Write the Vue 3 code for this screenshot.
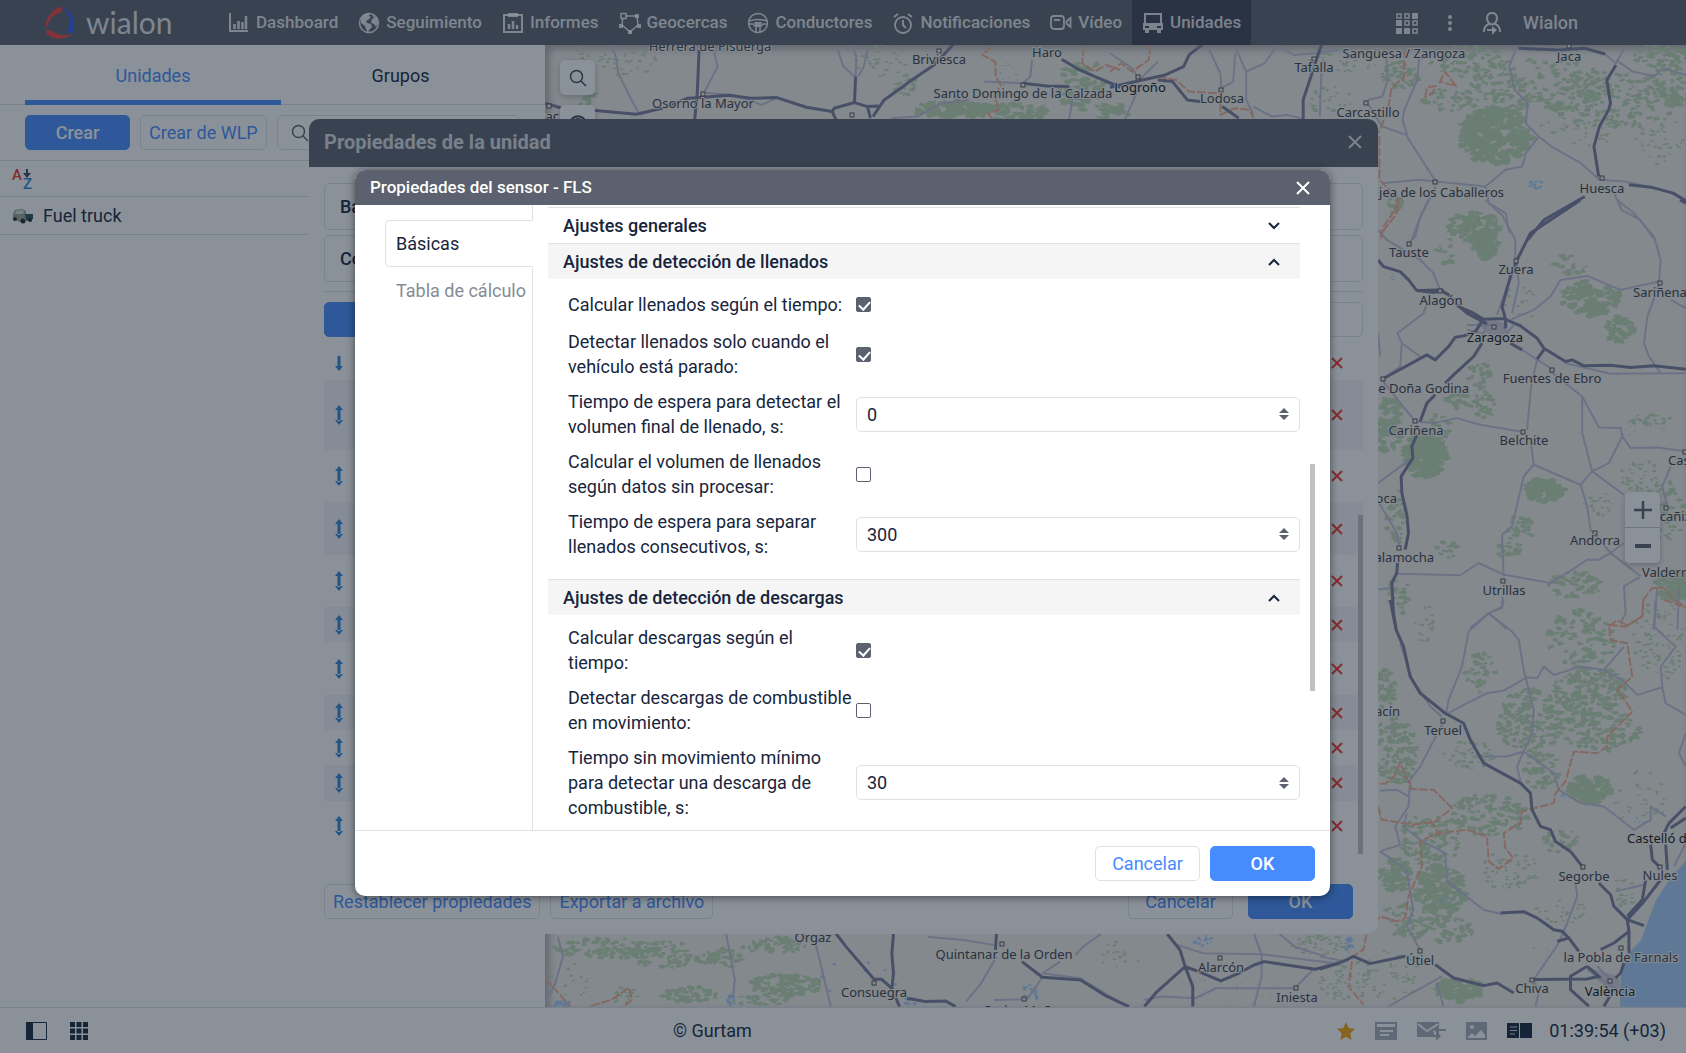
<script setup>
import { ref } from 'vue'

const navItems = [
  { icon: 'chart', label: 'Dashboard' },
  { icon: 'globe', label: 'Seguimiento' },
  { icon: 'report', label: 'Informes' },
  { icon: 'fence', label: 'Geocercas' },
  { icon: 'wheel', label: 'Conductores' },
  { icon: 'alarm', label: 'Notificaciones' },
  { icon: 'video', label: 'Vídeo' },
  { icon: 'bus', label: 'Unidades' }
]
const activeNav = ref('Unidades')

// rows of the sensors table behind the dialog
const sensorRows = [35, 70, 52, 53, 52, 35, 53, 35, 35, 36, 50]

const fillings = ref([
  { id: 'fill-time', type: 'checkbox', label: 'Calcular llenados según el tiempo:', value: true },
  { id: 'fill-stopped', type: 'checkbox', label: 'Detectar llenados solo cuando el vehículo está parado:', value: true },
  { id: 'fill-timeout', type: 'number', label: 'Tiempo de espera para detectar el volumen final de llenado, s:', value: 0 },
  { id: 'fill-raw', type: 'checkbox', label: 'Calcular el volumen de llenados según datos sin procesar:', value: false },
  { id: 'fill-split', type: 'number', label: 'Tiempo de espera para separar llenados consecutivos, s:', value: 300 }
])
const drains = ref([
  { id: 'drain-time', type: 'checkbox', label: 'Calcular descargas según el tiempo:', value: true },
  { id: 'drain-moving', type: 'checkbox', label: 'Detectar descargas de combustible en movimiento:', value: false },
  { id: 'drain-stop', type: 'number', label: 'Tiempo sin movimiento mínimo para detectar una descarga de combustible, s:', value: 30 }
])
const sections = ref([
  { title: 'Ajustes generales', open: false, fields: [] },
  { title: 'Ajustes de detección de llenados', open: true, fields: fillings },
  { title: 'Ajustes de detección de descargas', open: true, fields: drains }
])

// map tiles, each one with its own grid
const tiles = [
  {
    at: 'translate(540 0) scale(.37 .333)',
    main: 'M430 150L425 280L418 360M14 310L60 325L150 332L260 343L330 325L400 295L440 292L510 286L570 295L640 293L720 322L790 335L795 325L850 308L885 320L915 318M790 335L800 360M853 230L850 308M885 320L893 355M900 350L930 300L975 265L1005 240L1065 195L1120 130M1305 250L1370 258L1430 260M1410 178L1450 205L1500 230L1568 262',
    minor: 'M190 130L205 170L212 220L245 295L270 345M470 150L480 200L445 275L440 300M805 150L820 200L850 230M840 130L855 170L853 230M885 150L875 200L860 230M1330 180L1325 230L1305 250L1200 245M1160 300L1085 310L1020 350L950 355M1440 290L1430 360M440 278L520 285L600 315L640 293M270 345L310 330',
    border: 'M1220 140L1195 165L1230 185L1232 230L1245 255L1230 290L1240 330L1210 340L1225 360M1470 140L1465 190L1500 215L1530 195L1568 210'
  },
  {
    at: 'translate(1110 0) scale(.368 .333)',
    main: 'M0 262L70 245L150 225L200 200L215 165L255 130M130 240L170 245L210 300L245 305M305 320L350 355M575 135L565 165L555 200L540 250L525 300L525 360M1110 145L1220 150L1290 145L1345 162M1375 195L1350 240L1360 310L1355 330L1330 380L1315 440L1328 530M1290 590L1180 660L1135 720M1410 555L1470 562L1530 580L1568 605',
    minor: 'M0 160L60 205L80 240M130 185L80 240M270 150L300 220L303 270M340 140L370 215L370 300L390 345M455 135L420 190L370 215M303 265L335 245L340 160M40 360L80 260M575 200L570 350M390 320L440 350L480 345L520 355M455 140L500 165L560 160L620 150M750 160L755 240L740 290L700 300M840 170L835 240L800 330L795 360L810 415L885 545L840 540L740 550M700 310L740 380L805 405M885 545L1020 560L1075 510L1120 500L1130 460L1165 410L1130 370L1135 310L1100 270L1085 200L1105 140M1165 410L1200 440L1280 490L1330 540L1400 545L1470 562M1345 162L1375 190L1400 140M1375 180L1420 215L1480 230L1500 205L1565 225M885 560L840 660L820 720M1020 560L1030 610L1075 640L1085 700M1370 580L1390 630L1440 660L1480 720',
    border: 'M110 135L105 180L60 215L30 190L0 215M130 230L180 240L215 275L290 280M300 310L300 345L340 325L380 330L390 355M800 150L800 230L765 265L755 330L730 400M856 292L862 262L885 258L876 280L856 292M895 250L910 215L940 258L895 245M732 410V540L785 600L780 640L745 690L738 715'
  },
  {
    at: 'translate(1320 200) scale(.334 .333)',
    main: 'M174 180L190 200L240 215L265 240L290 272L360 270L385 285L415 320L460 340L490 358L550 356L600 378L650 415L670 445L735 485L755 480L790 498L870 496L930 503L1000 498L1095 508M290 272L340 278L370 270M415 318L440 340L500 372M190 536L320 465L345 480L385 440L405 412L430 408L465 395L490 358M780 0L630 100L590 180L570 230L555 285L545 320L555 356L556 385M650 478L670 450M485 430L460 470L400 525L375 550M345 585L320 610L300 665M290 705L275 740L278 775L243 830L245 880L260 945L265 1000L255 1050M232 1090L230 1120L215 1150L220 1240L228 1290M570 430L605 450M1078 0L1095 10',
    minor: 'M325 0L300 50L285 110L265 130M174 90L200 120L300 180L340 220L360 270M495 0L545 45L585 120L585 180M590 190L595 250L575 340M530 345L560 260L575 230M570 360L640 330L690 290L720 240L800 228L900 270L1015 245L1020 180L1000 110L940 40L890 0M1015 255L980 350L970 430L985 470L1020 520M1050 300L1095 325M190 536L240 500L245 430L232 400L310 340L320 310M245 430L300 470M174 400L180 470M185 540L285 665L340 670L410 655L480 675L600 695M605 450L690 505M440 375H520M500 372L490 400L440 390M650 478L632 560L620 690M630 715L640 795L780 855L815 815L910 885M690 515L785 590L785 700L815 815L865 790L905 710L900 685L835 683L785 590M905 710L930 745L1010 743L1060 750L1095 755M735 490L870 522L1095 520M640 795L610 830L575 980L545 1005L550 1130M780 855L800 920L810 990L870 1060L835 1080L800 1080L740 1120L690 1150L550 1125L475 1090L420 1127L232 1122M870 1060L910 1030M870 1060L960 1130M1050 800L1025 860L1040 920M174 850L275 775M174 905L230 1000L238 1040M547 1190L545 1225L505 1240L450 1285M505 1240L560 1290M174 1170L215 1165M960 1130L910 1160L915 1240L900 1270M1010 1160L1000 1290M1075 1170L1070 1290M580 375L560 400L550 380',
    border: 'M233 0L225 30L190 80L180 120M865 1280L890 1262L920 1278L965 1250L968 1200L995 1165L1030 1165L1060 1200L1095 1222'
  },
  {
    at: 'translate(1320 600) scale(.334 .333)',
    main: 'M210 0L228 90L250 140L270 230L300 280L375 340L430 370L450 420L490 490L600 550L630 580L635 630L660 680L690 690L705 725L750 755L785 800M835 850L870 885L880 920L920 960L970 978M920 960L925 995L880 1030L840 1050M920 960L970 905L1020 840M920 950L965 900L975 840M990 735L995 780L1015 800M1035 735L1040 810M1095 620L1045 670L1030 700M1095 655L1050 685M540 940L610 936L650 955L700 990L725 995L745 1015L775 1055M710 1025L745 1015M925 995L925 1060M800 1100L750 1130L750 1170L805 1220M640 1140L800 1138L835 1130M800 1100L840 1135M910 1090L900 1120L885 1135M868 1190L850 1220M345 1095L400 1135L490 1158L530 1150L580 1180M0 1108L70 1085L100 1070L150 1092L255 1070',
    minor: 'M550 0L545 20L505 40L445 95L425 200L385 300L378 340M505 40L570 90L595 120L610 210L640 330L635 400L610 455L590 500L600 545M385 340L440 310L500 280L550 272L620 232L650 235L670 200L700 225L780 200L850 210L910 140M850 210L910 245L950 285L1025 262L1020 200L1065 140L1000 80L1005 0M1025 262L1035 310L1095 345M1095 400L1075 460L1095 500M370 365L300 500L270 540L265 620L225 680L240 735L180 755M260 640L250 680L300 720L375 760L380 845L490 930L540 942M180 572L230 570L265 590M180 755L260 810L270 880L280 930L260 980L300 1050M490 470L560 470L610 455L700 520L715 570L780 610L850 620L940 690L990 660L990 620L1035 650M765 850L770 890L740 970L715 1030L640 1140L655 1180L645 1220M885 875L970 855M365 1130L205 1220M350 1150L370 1220M240 130L275 235L330 320L365 350M800 1110L890 1170M830 1100L870 1140L845 1160M0 1070L70 1085M1095 730L1060 800',
    border: 'M968 0L965 50L915 80L865 75L870 120L920 130L935 230L890 270L935 335L860 410L860 440L830 460L760 455L735 545L705 580L700 610L605 635L600 670L550 700L555 745L578 775L535 808L505 785L500 710L440 690L350 700L300 725L305 800L265 890L255 955L230 965L180 950L140 1000L130 1050L98 1070L85 1160L130 1215M174 620L185 660L280 675L345 665L395 625L340 570L275 568L240 490L222 530L195 552L174 550M330 660L360 710M1030 0L1095 22'
  },
  {
    at: 'translate(540 920) scale(.51 .333)',
    main: 'M575 30L600 80L655 178L670 178L690 205L693 160L690 100L693 42M690 205L705 260M720 235L755 245L795 243L815 260M895 42L893 90M945 125L985 172L1060 180L1110 228L1155 260M1230 42L1255 90L1265 140L1280 200L1280 260M1185 260L1210 215L1265 140L1300 160L1335 183L1370 160L1400 135L1420 125L1520 148L1568 130',
    minor: 'M10 250L30 190L45 110L35 50M365 42L375 120L382 180L378 235M540 70L550 130L570 260M760 50L830 60L890 75M895 110L865 190L835 245M1100 42L1065 80L1050 105M985 172L955 238L890 240M1020 125L985 160L1060 175L1150 260M1250 75L1300 100L1415 103L1560 130M1400 42L1415 103L1415 170L1400 260M1480 205L1325 205L1285 235L1220 230L1185 240M1450 42L1480 80L1540 110M1515 150L1480 205',
    border: 'M10 175L60 260M100 258L140 240L175 203L180 240L165 258'
  }
]

const places = [
  ['Herrera de Pisuerga', 710, 51], ['Osorno la Mayor', 703, 108], ['Briviesca', 939, 64], ['Haro', 1047, 57],
  ['Santo Domingo de la Calzada', 1023, 98], ['Logroño', 1140, 92, 'middle', true], ['Lodosa', 1222, 103],
  ['Tafalla', 1314, 72], ['Sangüesa / Zangoza', 1404, 58], ['Jaca', 1569, 61], ['Carcastillo', 1368, 117],
  ['Ejea de los Caballeros', 1504, 197, 'end'], ['Huesca', 1602, 193], ['Tauste', 1409, 257], ['Zuera', 1516, 274],
  ['Sariñena', 1633, 297, 'start'], ['Alagón', 1441, 305], ['Zaragoza', 1495, 342, 'middle', true],
  ['Fuentes de Ebro', 1552, 383], ['La Almunia de Doña Godina', 1469, 393, 'end'], ['Cariñena', 1416, 435],
  ['Belchite', 1524, 445], ['Caspe', 1668, 465, 'start'], ['Alcañiz', 1648, 521, 'start'], ['Daroca', 1397, 503, 'end'],
  ['Calamocha', 1434, 562, 'end'], ['Andorra', 1595, 545], ['Valderrobres', 1642, 577, 'start'], ['Utrillas', 1504, 595],
  ['Albarracín', 1400, 716, 'end'], ['Teruel', 1443, 735], ['Castelló de la Plana', 1627, 843, 'start', true],
  ['Segorbe', 1584, 881], ['Nules', 1660, 880], ['la Pobla de Farnals', 1621, 962], ['València', 1610, 996, 'middle', true],
  ['Chiva', 1532, 993], ['Útiel', 1420, 965], ['Orgaz', 813, 942], ['Quintanar de la Orden', 1004, 959],
  ['Alarcón', 1221, 972], ['Iniesta', 1297, 1002], ['Consuegra', 874, 997], ['Pedro Muñoz', 1025, 1015], ['Monzac', 559, 121, 'end']
]
const towns = [
  [703, 94], [852, 115], [939, 51], [1023, 85], [1138, 77], [1221, 90], [1314, 59], [1366, 103], [1569, 46], [1435, 182],
  [1602, 178], [1409, 244], [1516, 261], [1660, 283], [1440, 291], [1494, 327], [1552, 370], [1383, 379], [1415, 421],
  [1523, 432], [1685, 452], [1666, 508], [1399, 548], [1595, 533], [1503, 581], [1443, 721], [1583, 867], [1660, 867],
  [1621, 948], [1610, 981], [1532, 980], [1420, 951], [1002, 944], [1220, 958], [1296, 988], [874, 983], [1024, 999], [549, 106]
]

// wooded areas: centre x, y, radius x, y, amount of speckles, speckle size
const woods = [
  [580, 65, 10, 22, 25, 2], [588, 100, 8, 14, 18, 4], [628, 62, 30, 15, 40, 2], [880, 60, 28, 16, 40, 2], [905, 85, 16, 10, 20, 3],
  [955, 110, 40, 9, 90, 4], [1010, 112, 40, 8, 60, 4], [1080, 85, 26, 25, 60, 4], [1110, 112, 22, 8, 20, 4], [1330, 100, 26, 14, 25, 2],
  [1345, 60, 35, 12, 50, 2], [1400, 75, 20, 14, 45, 3], [1470, 62, 40, 16, 70, 3], [1540, 85, 70, 26, 190, 3], [1610, 100, 70, 28, 170, 3],
  [1660, 55, 30, 12, 60, 3], [1670, 85, 24, 22, 70, 3], [1495, 135, 35, 28, 210, 5], [1450, 100, 30, 12, 40, 3], [1580, 130, 40, 16, 40, 2],
  [1660, 140, 25, 25, 40, 2], [1475, 228, 26, 16, 90, 4], [1485, 245, 14, 14, 60, 4], [1445, 252, 12, 14, 15, 3], [1395, 205, 8, 8, 20, 3],
  [1570, 265, 18, 12, 22, 3], [1590, 298, 28, 18, 100, 4], [1620, 330, 14, 14, 40, 4], [1520, 310, 18, 25, 15, 2], [1480, 375, 12, 14, 30, 3],
  [1485, 405, 12, 14, 25, 3], [1460, 400, 14, 8, 20, 4], [1388, 425, 14, 28, 70, 4], [1425, 455, 20, 22, 140, 5], [1440, 430, 10, 20, 25, 3],
  [1396, 515, 10, 28, 30, 3], [1545, 490, 20, 12, 75, 4], [1520, 530, 14, 14, 30, 3], [1510, 550, 12, 10, 25, 3], [1400, 595, 12, 20, 25, 3],
  [1450, 550, 14, 10, 14, 3], [1650, 420, 22, 6, 30, 2], [1640, 475, 20, 16, 40, 2], [1665, 510, 20, 30, 60, 3], [1672, 585, 18, 16, 80, 4],
  [1600, 505, 18, 12, 20, 2], [1575, 585, 26, 14, 70, 3], [1580, 640, 35, 30, 110, 3], [1660, 640, 26, 40, 90, 2], [1425, 625, 10, 20, 20, 2],
  [1480, 670, 16, 22, 35, 3], [1385, 690, 10, 22, 50, 3], [1395, 750, 22, 35, 130, 3], [1590, 690, 36, 26, 190, 3], [1530, 720, 34, 32, 190, 3],
  [1600, 730, 40, 22, 140, 3], [1470, 755, 26, 14, 60, 2], [1590, 790, 22, 14, 100, 4], [1540, 770, 20, 18, 50, 3], [1490, 815, 40, 22, 120, 3],
  [1430, 840, 30, 26, 110, 3], [1395, 875, 16, 16, 60, 4], [1440, 890, 26, 24, 130, 4], [1410, 920, 30, 18, 60, 3], [1510, 870, 30, 20, 60, 2],
  [1560, 840, 18, 14, 30, 3], [1640, 800, 25, 30, 30, 2], [1560, 910, 26, 16, 26, 2], [1625, 895, 12, 20, 24, 2], [1460, 990, 24, 12, 80, 4],
  [1390, 975, 30, 25, 50, 2], [1345, 980, 26, 22, 60, 2], [1450, 930, 24, 14, 50, 3], [605, 948, 50, 10, 90, 3], [660, 955, 34, 14, 80, 3],
  [720, 958, 24, 10, 50, 3], [775, 945, 34, 8, 50, 3], [785, 985, 36, 12, 140, 3], [690, 995, 28, 8, 60, 3], [625, 995, 14, 10, 26, 2],
  [760, 1000, 30, 5, 26, 3], [1120, 955, 26, 14, 16, 2], [1240, 990, 60, 14, 26, 1], [1320, 945, 30, 10, 50, 2], [570, 975, 20, 26, 14, 2]
]
const waters = [
  [1536, 184, 6, 5, 12, 2], [1008, 75, 10, 14, 14, 1], [1393, 277, 2, 3, 6, 1], [1336, 94, 2, 3, 6, 1], [860, 980, 40, 20, 14, 2],
  [910, 1000, 6, 7, 14, 2], [731, 1000, 5, 5, 14, 2], [1205, 942, 10, 6, 14, 2], [1443, 900, 6, 6, 10, 1], [1565, 795, 8, 4, 10, 1],
  [1640, 820, 6, 4, 8, 1], [1640, 430, 26, 12, 20, 1], [1348, 945, 5, 8, 16, 2], [562, 1004, 12, 4, 20, 2], [1030, 995, 8, 12, 18, 2], [1550, 950, 30, 4, 6, 1]
]

// small fixed-seed generator so the vegetation never jumps between renders
let seed = 20417
function rnd() {
  seed = (seed * 16807) % 2147483647
  return seed / 2147483647
}

function speckle(areas) {
  let d = ''
  for (const [cx, cy, rx, ry, n, size] of areas) {
    for (let i = 0; i < n; i++) {
      const a = rnd() * Math.PI * 2
      const r = Math.sqrt(rnd())
      const x = cx + Math.cos(a) * rx * r
      const y = cy + Math.sin(a) * ry * r
      const pts = []
      for (let k = 0; k < 6; k++) {
        const t = (k / 6) * Math.PI * 2
        const s = size * (0.3 + rnd() * 0.9)
        pts.push((x + Math.cos(t) * s * 1.3).toFixed(1) + ' ' + (y + Math.sin(t) * s * 0.8).toFixed(1))
      }
      d += 'M' + pts.join('L') + 'Z'
    }
  }
  return d
}
const woodPath = speckle(woods)
const waterPath = speckle(waters)
</script>

<template>
  <div class="app">
    <header class="topbar">
      <div class="logo">
        <svg width="32" height="34" viewBox="0 0 32 34">
          <path d="M16 1C8 3 1 13 1 23c0 1 1 1 1 0C4 15 9 9 15 7c4-1 5-6 1-6z" fill="#f2433c" />
          <path d="M5 24c-3-1-4 3-1 5 7 5 17 5 24-1-8 2-14 1-19-2-2-1-3-2-4-2z" fill="#f2433c" />
          <path d="M18 1c9 3 14 13 11 24-1 3-6 3-5 0 3-9 2-18-6-24z" fill="#2f5fff" />
        </svg>
        <span>wialon</span>
      </div>
      <nav>
        <a v-for="item in navItems" :key="item.label" href="#" :class="{ active: item.label === activeNav }" @click.prevent="activeNav = item.label">
          <svg class="ic" viewBox="0 0 22 22" fill="none" stroke="currentColor" stroke-width="2">
            <g v-if="item.icon === 'chart'"><path d="M2 1v18h18" /><path d="M6.500 12v5M10.500 9v8M14.500 10v7M18 4v13" stroke-width="2.500" /></g>
            <g v-else-if="item.icon === 'globe'">
              <circle cx="11" cy="11" r="9.500" stroke-width="1.500" />
              <path d="M3 6l4-4 5-1-1 3 2 1-3 3-2 1 1 2 4 1 1 3-3 3-1 3-2-4-1-3-4-3zM14 3l5 3 1 5-2 4-2-3-3-1 1-4 2-1z" fill="currentColor" stroke="none" />
            </g>
            <g v-else-if="item.icon === 'report'"><path d="M2 3h18v17H2z" /><path d="M6 1h10v4H6z" fill="currentColor" stroke="none" /><path d="M7 12v5M11 9v8M15 13v4" stroke-width="2.500" /></g>
            <g v-else-if="item.icon === 'fence'">
              <path d="M4 4l14 0M4 4l-1 9 8 7 8-7-1-9" stroke-width="1.500" />
              <path d="M2 1.500h5v5H2z" fill="#5b616e" stroke-width="1.500" /><path d="M16 2h4v4h-4zM0 12h4v4H0zM18 12h4v4h-4zM9 18h4v4H9z" fill="currentColor" stroke="none" />
            </g>
            <g v-else-if="item.icon === 'wheel'"><circle cx="11" cy="11" r="9.500" stroke-width="1.500" /><path d="M2 9c6-2 12-2 18 0M2 12h4l3 3v5M20 12h-4l-3 3v5" stroke-width="1.500" /><path d="M7 10h8l-2 5H9z" fill="currentColor" stroke="none" /></g>
            <g v-else-if="item.icon === 'alarm'"><circle cx="11" cy="13" r="8" stroke-width="1.800" /><path d="M11 8v5l3 3M2 5l4-3M20 5l-4-3" /></g>
            <g v-else-if="item.icon === 'video'"><rect x="1" y="4" width="13" height="13" rx="3" stroke-width="1.800" /><path d="M4 8h6M16.500 9.500l4-3.500v9l-4-3.500z" stroke-width="1.800" /></g>
            <path v-else d="M2 1h18v10h1v7h-2v3h-4v-3H7v3H3v-3H1v-7h1zM4 3v8h14V3zM3 14h4v2H3zM15 14h4v2h-4z" fill="currentColor" fill-rule="evenodd" stroke="none" />
          </svg>
          {{ item.label }}
        </a>
      </nav>
      <div class="user">
        <button aria-label="Aplicaciones">
          <svg width="22" height="22" viewBox="0 0 22 22" fill="none" stroke="currentColor" stroke-width="1.500">
            <path d="M1 2h4v4H1zM9 2h4v4H9zM9 9h4v4H9zM17 9h4v4h-4zM17 17h4v4h-4z" />
            <path d="M16 1h6v6h-6zM0 8h6v6H0zM0 16h6v6H0zM8 16h6v6H8z" fill="currentColor" stroke="none" />
          </svg>
        </button>
        <button aria-label="Más">
          <svg width="6" height="18" viewBox="0 0 6 18" fill="currentColor"><circle cx="3" cy="3" r="2" /><circle cx="3" cy="9" r="2" /><circle cx="3" cy="15" r="2" /></svg>
        </button>
        <button class="account">
          <svg width="20" height="24" viewBox="0 0 20 24" fill="none" stroke="currentColor" stroke-width="2">
            <path d="M10 2c-6 0-6 7-3 10 2 2 4 2 6 0 3-3 3-10-3-10zM2 21c0-5 2-7 5-8M18 21c0-5-2-7-5-8M5 19h8" />
            <path d="M10 15l5 4-5 5z" fill="currentColor" stroke="none" />
          </svg>
          Wialon
        </button>
      </div>
    </header>

    <main>
      <aside class="panel">
        <div class="tabs">
          <button class="on">Unidades</button>
          <button>Grupos</button>
        </div>
        <div class="tools">
          <button class="btn primary">Crear</button>
          <button class="btn">Crear de WLP</button>
          <label class="search">
            <svg width="18" height="18" viewBox="0 0 18 18" fill="none" stroke="#5b616e" stroke-width="1.500"><circle cx="7.500" cy="7.500" r="6" /><path d="M12 12l5 5" /></svg>
            <input type="text" aria-label="Buscar">
          </label>
        </div>
        <div class="sort">
          <span class="letter-a">A</span>
          <span class="letter-z">
            <svg width="8" height="9" viewBox="0 0 8 9"><path d="M3 0h2v4h3L4 9 0 4h3z" fill="#37465c" /></svg>
            Z
          </span>
        </div>
        <div class="unit">
          <svg width="22" height="16" viewBox="0 0 22 16">
            <path d="M1 6l2-4 7-1 4 2v8l-6 3-7-3z" fill="#9aa597" /><path d="M4 3l5-1 3 1-1 3-8 0z" fill="#dce2da" /><path d="M13 6h8v5l-7 2z" fill="#2b555c" />
            <circle cx="11" cy="13" r="2.500" fill="#21281f" /><circle cx="3" cy="11" r="2" fill="#21281f" /><circle cx="18" cy="12" r="2" fill="#21281f" />
          </svg>
          Fuel truck
        </div>
      </aside>

      <div class="map">
        <svg class="canvas" width="100%" height="100%">
          <g transform="translate(-545 -45)">
            <path :d="woodPath" class="wood" />
            <path :d="waterPath" class="water" />
            <path class="water" d="M1686 861L1671 877L1656 900L1641 940L1629 953L1621 973L1620 1010H1800V861Z" />
            <path class="town-area" d="M1590 968l14 4 14 4 4 14-14-2-14-10zM1476 322l18-2 14 4-4 12-16-2z" />
            <g v-for="tile in tiles" :key="tile.at" :transform="tile.at">
              <path class="road minor" :d="tile.minor" />
              <path class="road border-line" :d="tile.border" />
              <path class="road main-road" :d="tile.main" />
            </g>
            <rect v-for="(t, i) in towns" :key="'t' + i" class="town" :x="t[0] - 2" :y="t[1] - 2" width="4" height="4" />
            <text v-for="p in places" :key="p[0]" :x="p[1]" :y="p[2]" :text-anchor="p[3] || 'middle'" :class="{ capital: p[4] }">{{ p[0] }}</text>
          </g>
        </svg>
        <div class="map-tools">
          <button aria-label="Buscar en el mapa">
            <svg width="18" height="18" viewBox="0 0 18 18" fill="none" stroke="#3a4453" stroke-width="1.500"><circle cx="7.500" cy="7.500" r="6" /><path d="M12 12l5 5" /></svg>
          </button>
          <button aria-label="Visibilidad">
            <svg width="20" height="18" viewBox="0 0 20 18" fill="none" stroke="#3a4453" stroke-width="2"><path d="M1 9c5-9 13-9 18 0-5 8-13 8-18 0z" /><circle cx="10" cy="8" r="3" /></svg>
          </button>
        </div>
        <div class="zoom">
          <button aria-label="Acercar"><svg width="18" height="18" viewBox="0 0 18 18" stroke="#5b616e" stroke-width="2.500"><path d="M9 0v18M0 9h18" /></svg></button>
          <button aria-label="Alejar"><svg width="18" height="18" viewBox="0 0 18 18" stroke="#5b616e" stroke-width="4"><path d="M1 9h16" /></svg></button>
        </div>
      </div>
    </main>

    <footer class="statusbar">
      <div class="left">
        <svg width="21" height="18" viewBox="0 0 21 18"><path d="M.500 .500h20v17H.500z" fill="none" stroke="#17253c" /><path d="M0 0h7v18H0z" fill="#17253c" /></svg>
        <svg width="18" height="18" viewBox="0 0 18 18" fill="#17253c"><path d="M0 0h5v5H0zM6.500 0h5v5h-5zM13 0h5v5h-5zM0 6.500h5v5H0zM6.500 6.500h5v5h-5zM13 6.500h5v5h-5zM0 13h5v5H0zM6.500 13h5v5h-5zM13 13h5v5h-5z" /></svg>
      </div>
      <span class="copy">© Gurtam</span>
      <div class="status">
        <svg width="18" height="18" viewBox="0 0 18 18"><path d="M9 0l2.700 6 6.300.700-4.700 4.500L14.600 18 9 14.700 3.400 18l1.300-6.800L0 6.700 6.300 6z" fill="#f6a409" /></svg>
        <svg width="22" height="18" viewBox="0 0 22 18"><path d="M0 0h22v18H0zM2 2v3h18V2zM5 8v2h13V8zM5 12v2h9v-2z" fill="#a9aeb6" fill-rule="evenodd" /></svg>
        <svg width="29" height="18" viewBox="0 0 29 18">
          <path d="M0 0h22v5l-6 4 2 6H0z" fill="#a9aeb6" /><path d="M1 2l9 7L21 2" fill="none" stroke="#fff" stroke-width="2" />
          <path d="M29 8h-8M14 14h6" stroke="#a9aeb6" stroke-width="2" /><path d="M22 3v10l-5-5zM19 9l5 5-5 5z" fill="#a9aeb6" />
        </svg>
        <svg width="21" height="18" viewBox="0 0 21 18"><path d="M0 0h21v18H0zM2 15l4-4 3 3 6-6 4 5v3H2zM6 3a2 2 0 100 4 2 2 0 000-4z" fill="#a9aeb6" fill-rule="evenodd" /></svg>
        <svg width="25" height="15" viewBox="0 0 25 15"><path d="M0 0h12v15H0zM13 0h12v15H13z" fill="#17253c" /><path d="M3 4h7M3 7.500h7M3 11h5" stroke="#d5d8dc" /></svg>
        <span>01:39:54 (+03)</span>
      </div>
    </footer>

    <section class="unit-dialog" aria-label="Propiedades de la unidad">
      <div class="unit-head">
        Propiedades de la unidad
        <button aria-label="Cerrar"><svg width="14" height="14" viewBox="0 0 14 14" stroke="currentColor" stroke-width="2"><path d="M1 1l12 12M13 1L1 13" /></svg></button>
      </div>
      <div class="unit-body">
        <div class="fold">Ba</div>
        <div class="fold">Co</div>
        <div class="sensor-tools">
          <button class="btn primary"></button>
          <input type="text" aria-label="Filtrar sensores">
        </div>
        <div class="sensors">
          <div v-for="(h, i) in sensorRows" :key="i" class="sensor" :style="{ height: h + 'px' }">
            <svg width="8" height="20" viewBox="0 0 8 20" fill="#2b86d9">
              <path v-if="i" d="M2.500 4h3v12h-3zM4 0l4 5H0zM4 20l4-5H0z" />
              <path v-else d="M2.500 3h3v10h-3zM4 18l4-5H0z" />
            </svg>
            <button aria-label="Eliminar"><svg width="12" height="12" viewBox="0 0 12 12" stroke="#f2352f" stroke-width="2"><path d="M1 1l10 10M11 1L1 11" /></svg></button>
          </div>
        </div>
      </div>
      <div class="unit-foot">
        <button class="btn">Restablecer propiedades</button>
        <button class="btn">Exportar a archivo</button>
        <span class="grow"></span>
        <button class="btn wide">Cancelar</button>
        <button class="btn primary">OK</button>
      </div>
      <i class="thumb"></i>
    </section>

    <div class="overlay">
      <section class="dialog" role="dialog" aria-label="Propiedades del sensor">
        <div class="dialog-head">
          Propiedades del sensor - FLS
          <button aria-label="Cerrar"><svg width="14" height="14" viewBox="0 0 14 14" stroke="#fff" stroke-width="2"><path d="M1 1l12 12M13 1L1 13" /></svg></button>
        </div>
        <div class="dialog-body">
          <div class="side">
            <button class="side-tab on">Básicas</button>
            <button class="side-tab">Tabla de cálculo</button>
          </div>
          <div class="content">
            <div v-for="s in sections" :key="s.title" class="section">
              <button class="section-head" :class="{ open: s.open }" @click="s.open = !s.open">
                {{ s.title }}
                <svg width="14" height="8" viewBox="0 0 14 8" fill="none" stroke="#17253c" stroke-width="2"><path :d="s.open ? 'M2 7l5-5 5 5' : 'M2 1l5 5 5-5'" /></svg>
              </button>
              <div v-if="s.open" class="fields">
                <div v-for="f in s.fields" :key="f.id" class="field">
                  <label :for="f.id">{{ f.label }}</label>
                  <input v-if="f.type === 'checkbox'" :id="f.id" v-model="f.value" type="checkbox">
                  <div v-else class="number">
                    <input :id="f.id" v-model="f.value" type="number">
                    <svg width="10" height="12" viewBox="0 0 10 12" fill="#5b616e"><path d="M5 0l5 5H0zM5 12l5-5H0z" /></svg>
                  </div>
                </div>
              </div>
            </div>
          </div>
          <i class="thumb"></i>
        </div>
        <div class="dialog-foot">
          <button class="btn wide">Cancelar</button>
          <button class="btn primary">OK</button>
        </div>
      </section>
    </div>
  </div>
</template>

<style>
body {
  margin: 0;
}
</style>

<style scoped>
* {
  box-sizing: border-box;
}

.app {
  position: relative;
  display: flex;
  flex-direction: column;
  height: 100vh;
  overflow: hidden;
  background: #fff;
  color: #17253c;
  font: 18px/25px Roboto, "Liberation Sans", sans-serif;
}

button,
input {
  font: inherit;
  color: inherit;
}

button {
  padding: 0;
  border: 0;
  background: none;
  cursor: pointer;
}

svg {
  display: block;
  flex: none;
}

/* top bar */
.topbar {
  display: flex;
  flex: none;
  height: 45px;
  background: #5b616e;
  color: rgba(255, 255, 255, 0.85);
  font-size: 17px;
  font-weight: 500;
}

.logo {
  display: flex;
  align-items: center;
  gap: 10px;
  width: 218px;
  padding-left: 44px;
  font: 30px/45px Lato, sans-serif;
}

nav {
  display: flex;
}

nav a {
  display: flex;
  align-items: center;
  gap: 6px;
  padding: 0 10px;
  color: inherit;
  text-decoration: none;
}

nav a.active {
  background: #3d4254;
}

.ic {
  width: 22px;
  height: 22px;
}

.user {
  display: flex;
  align-items: center;
  gap: 29px;
  margin-left: auto;
  padding-right: 108px;
}

.account {
  display: flex;
  align-items: center;
  gap: 21px;
  font-size: 18px;
}

/* units panel */
main {
  display: flex;
  flex: 1;
  min-height: 0;
}

.panel {
  flex: none;
  width: 545px;
}

.tabs {
  display: flex;
  height: 60px;
  padding: 0 25px;
  border-bottom: 1px solid #dcdee1;
}

.tabs button {
  flex: 1 1 auto;
  height: 60px;
  padding-top: 5px;
  border-bottom: 5px solid transparent;
}

.tabs .on {
  border-color: #468cff;
  color: #468cff;
}

.tools {
  display: flex;
  gap: 10px;
  padding: 10px 25px;
  border-bottom: 1px solid #dcdee1;
}

.btn {
  height: 35px;
  padding: 0 8px;
  border: 1px solid #dfe1e4;
  border-radius: 5px;
  color: #468cff;
  white-space: nowrap;
}

.btn.wide {
  width: 105px;
}

.btn.primary {
  width: 105px;
  border-color: #468cff;
  background: #468cff;
  color: #fff;
  font-weight: 500;
}

.search {
  display: flex;
  flex: 1;
  align-items: center;
  padding-left: 13px;
  border: 1px solid #dfe1e4;
  border-radius: 5px;
}

.search input {
  width: 100px;
  border: 0;
  background: none;
}

.sort {
  display: flex;
  gap: 1px;
  height: 36px;
  padding: 8px 12px;
  border-bottom: 1px solid #dcdee1;
  font-size: 15px;
  font-weight: 500;
  line-height: 12px;
}

.letter-a {
  color: #f2352f;
}

.letter-z {
  width: 10px;
  color: #2b86d9;
}

.unit {
  display: flex;
  align-items: center;
  gap: 9px;
  height: 38px;
  padding-left: 12px;
  border-bottom: 1px solid #dcdee1;
}

/* map */
.map {
  position: relative;
  flex: 1;
  overflow: hidden;
  background: #f2efe9;
  box-shadow: inset 4px 4px 8px rgba(0, 0, 0, 0.3);
}

.canvas {
  display: block;
}

.wood {
  fill: #c0d8b3;
}

.water {
  fill: #a9cdf8;
}

.town-area {
  fill: #d3d0dc;
}

.road {
  fill: none;
  stroke-linejoin: round;
  vector-effect: non-scaling-stroke;
}

.minor {
  stroke: #c3bfd6;
  stroke-width: 2;
}

.main-road {
  stroke: #7b7c9d;
  stroke-width: 3;
}

.border-line {
  stroke: #f5ad91;
  stroke-width: 2;
  stroke-dasharray: 9 2;
}

.town {
  fill: #f2efe9;
  stroke: #555;
}

.map text {
  fill: #40404a;
  stroke: #f2efe9;
  stroke-width: 2px;
  paint-order: stroke;
  font: 13px "Noto Sans", sans-serif;
}

.map .capital {
  fill: #111;
}

.map-tools {
  position: absolute;
  top: 15px;
  left: 15px;
}

.map-tools button,
.zoom button {
  display: flex;
  align-items: center;
  justify-content: center;
  width: 35px;
  height: 35px;
  background: #fff;
}

.map-tools button {
  margin-bottom: 10px;
  border-radius: 5px;
  box-shadow: 0 2px 6px rgba(0, 0, 0, 0.25);
}

.zoom {
  position: absolute;
  right: 26px;
  bottom: 444px;
  overflow: hidden;
  border-radius: 5px;
  box-shadow: 0 2px 6px rgba(0, 0, 0, 0.25);
}

.zoom button + button {
  border-top: 1px solid #c5c8cd;
  height: 36px;
}

/* status bar */
.statusbar {
  display: flex;
  flex: none;
  align-items: center;
  height: 46px;
  border-top: 1px solid #dcdee1;
  background: #fff;
}

.left {
  display: flex;
  gap: 23px;
  width: 673px;
  padding-left: 26px;
}

.status {
  display: flex;
  align-items: center;
  gap: 20px;
  margin-left: auto;
  padding-right: 20px;
}

.status span {
  margin-left: -3px;
}

/* unit properties */
.unit-dialog {
  position: absolute;
  top: 119px;
  bottom: 119px;
  left: 50%;
  display: flex;
  flex-direction: column;
  width: 1069px;
  margin-left: -534px;
  overflow: hidden;
  border-radius: 10px;
  background: #fff;
}

.unit-head {
  display: flex;
  flex: none;
  align-items: center;
  justify-content: space-between;
  height: 48px;
  padding: 0 16px 2px 15px;
  background: #5b616e;
  color: rgba(255, 255, 255, 0.8);
  font-size: 20px;
  font-weight: 700;
}

.unit-body {
  flex: 1;
  min-height: 0;
  padding: 16px 15px 0;
}

.fold {
  height: 47px;
  margin-bottom: 5px;
  padding: 10px 15px;
  border: 1px solid #dfe1e4;
  border-radius: 5px;
  font-weight: 500;
}

.sensor-tools {
  display: flex;
  gap: 10px;
  margin-top: 9px;
  padding: 10px 0 8px;
  border-top: 1px solid #dcdee1;
}

.sensor-tools input {
  flex: 1;
  border: 1px solid #dfe1e4;
  border-radius: 5px;
}

.sensor {
  display: flex;
  align-items: center;
  justify-content: space-between;
  padding: 0 20px 0 11px;
}

.sensor:nth-child(even) {
  background: #f4f5f6;
}

.unit-foot {
  display: flex;
  flex: none;
  gap: 10px;
  padding: 0 25px 15px 15px;
}

.unit-foot .primary {
  margin-left: 5px;
}

.grow {
  flex: 1;
}

.thumb {
  position: absolute;
  right: 15px;
  top: 259px;
  width: 5px;
  height: 227px;
  background: #c1c1c1;
}

.unit-dialog .thumb {
  top: 396px;
  height: 339px;
}

/* sensor properties */
.overlay {
  position: absolute;
  inset: 0;
  display: flex;
  align-items: center;
  justify-content: center;
  padding: 13px 1px 0 0;
  background: rgba(21, 35, 51, 0.5);
}

.dialog {
  display: flex;
  flex-direction: column;
  width: 975px;
  height: calc(100vh - 327px);
  overflow: hidden;
  border-radius: 10px;
  background: #fff;
  box-shadow: 0 1px 8px rgba(0, 0, 0, 0.5);
}

.dialog-head {
  display: flex;
  flex: none;
  align-items: center;
  justify-content: space-between;
  height: 35px;
  padding: 0 20px 0 15px;
  background: #5b616e;
  color: #fff;
  font-size: 17px;
  font-weight: 500;
}

.dialog-body {
  position: relative;
  display: flex;
  flex: 1;
  min-height: 0;
}

.side {
  display: flex;
  flex: none;
  flex-direction: column;
  width: 178px;
  padding-left: 30px;
}

.side::before,
.side::after {
  content: "";
  height: 15px;
  border-right: 1px solid #dfe1e4;
}

.side::after {
  flex: 1;
}

.side-tab {
  height: 47px;
  padding: 0 10px;
  border: 1px solid transparent;
  border-right-color: #dfe1e4;
  color: #868b95;
  text-align: left;
  white-space: nowrap;
}

.side-tab.on {
  border-color: #dfe1e4;
  border-right-color: transparent;
  border-radius: 5px 0 0 5px;
  color: #17253c;
}

.content {
  flex: 1;
  overflow: hidden;
  padding: 2px 30px 0 15px;
}

.section-head {
  display: flex;
  align-items: center;
  justify-content: space-between;
  width: 100%;
  height: 36px;
  padding: 0 19px 0 15px;
  border-top: 1px solid #dfe1e4;
  font-weight: 500;
}

.section-head.open {
  background: #f5f5f5;
}

.fields {
  padding: 5px 0 15px 20px;
}

.field {
  display: flex;
  align-items: center;
  gap: 3px;
  min-height: 40px;
  padding: 5px 0;
}

.field label {
  flex: none;
  width: 285px;
}

input[type="checkbox"] {
  position: relative;
  width: 15px;
  height: 15px;
  margin: 0;
  appearance: none;
  border: 1px solid #5b616e;
  border-radius: 2px;
}

input[type="checkbox"]:checked {
  background: #5b616e;
}

input[type="checkbox"]:checked::after {
  content: "";
  position: absolute;
  top: 1px;
  left: 4px;
  width: 5px;
  height: 9px;
  border: solid #fff;
  border-width: 0 2px 2px 0;
  transform: rotate(42deg);
}

.number {
  display: flex;
  flex: 1;
  align-items: center;
  height: 35px;
  padding: 0 10px;
  border: 1px solid #dfe1e4;
  border-radius: 5px;
}

.number input {
  flex: 1;
  min-width: 0;
  padding: 0;
  border: 0;
  outline: 0;
  appearance: textfield;
}

.number input::-webkit-inner-spin-button {
  display: none;
}

.dialog-foot {
  display: flex;
  flex: none;
  justify-content: flex-end;
  gap: 10px;
  padding: 15px;
  border-top: 1px solid #dfe1e4;
}
</style>
